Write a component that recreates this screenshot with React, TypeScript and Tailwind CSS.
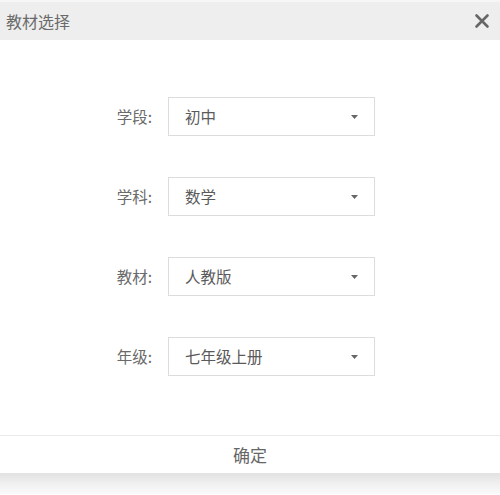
import React from "react";

const font = { fontFamily: '"Noto Sans CJK SC", "Noto Sans", sans-serif' };

function Caret() {
  return (
    <svg width="7" height="4" viewBox="0 0 7 4" className="block">
      <path d="M0 0 H7 L3.5 4 Z" fill="#666" />
    </svg>
  );
}

function Field({ label, value }: { label: string; value: string }) {
  return (
    <div className="flex items-center">
      <div className="w-[53px] text-right text-[15.5px] text-[#6a6a6a] leading-none">{label}</div>
      <div className="ml-[16px] flex h-[39px] w-[207px] items-center justify-between border border-[#dcdcdc] bg-white pl-[16px] pr-[16px]">
        <span className="text-[15.5px] leading-none text-[#5a5a5a]">{value}</span>
        <Caret />
      </div>
    </div>
  );
}

export default function App() {
  const fields = [
    { label: "学段:", value: "初中" },
    { label: "学科:", value: "数学" },
    { label: "教材:", value: "人教版" },
    { label: "年级:", value: "七年级上册" },
  ];
  return (
    <div className="flex h-[495px] w-[500px] flex-col bg-white" style={font}>
      <div className="h-[2px] bg-[#f6f6f6]" />
      <div className="flex h-[38px] items-center justify-between bg-[#eeeeee] pl-[6px] pr-[10px]">
        <span className="text-[16px] leading-none text-[#6a6a6a]">教材选择</span>
        <svg width="16" height="16" viewBox="0 0 16 16">
          <path d="M2.5 2.5 L13.5 13.5 M13.5 2.5 L2.5 13.5" stroke="#666" strokeWidth="2.6" strokeLinecap="round" />
        </svg>
      </div>
      <div className="flex h-[395px] flex-col gap-[41px] pl-[99px] pt-[57px]">
        {fields.map((f) => (
          <Field key={f.label} label={f.label} value={f.value} />
        ))}
      </div>
      <div className="h-[1px] bg-[#eaeaea]" />
      <div className="flex h-[37px] items-center justify-center bg-white">
        <span className="text-[17px] leading-none text-[#666]">确定</span>
      </div>
      <div className="h-[21px] bg-gradient-to-b from-[#e2e2e2] via-[#f0f0f0] to-[#fafafa]" />
    </div>
  );
}
